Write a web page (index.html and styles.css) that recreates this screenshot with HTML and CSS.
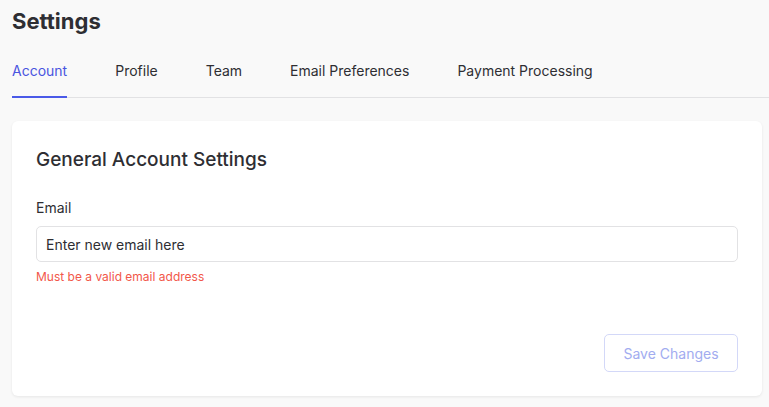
FILE: index.html
```html
<!DOCTYPE html>
<html lang="en">
<head>
  <meta charset="UTF-8">
  <meta name="viewport" content="width=device-width, initial-scale=1.0">
  <title>Settings</title>
  <link rel="stylesheet" href="styles.css">
</head>
<body>
  <div class="page">
    <h1 class="title">Settings</h1>
    <ul class="tabs">
      <li class="tab active">Account</li>
      <li class="tab">Profile</li>
      <li class="tab">Team</li>
      <li class="tab">Email Preferences</li>
      <li class="tab">Payment Processing</li>
    </ul>
    <div class="card">
      <h2 class="card-title">General Account Settings</h2>
      <label class="label" for="email">Email</label>
      <input class="input" id="email" type="text" value="Enter new email here">
      <div class="error">Must be a valid email address</div>
      <div class="actions">
        <button class="btn" disabled>Save Changes</button>
      </div>
    </div>
  </div>
</body>
</html>
```

FILE: styles.css
```css
* {
  margin: 0;
  padding: 0;
  box-sizing: border-box;
}

html,
body {
  width: 100%;
  height: 100%;
  overflow: hidden;
}

body {
  background-color: #f9f9f9;
  font-family: Inter, "Liberation Sans", sans-serif;
  color: #2e2e33;
}

.page {
  padding-left: 12px;
}

.title {
  font-size: 22px;
  font-weight: 700;
  line-height: 30px;
  padding-top: 6px;
}

.tabs {
  list-style: none;
  display: flex;
  gap: 48px;
  margin-top: 25px;
  border-bottom: 1px solid #e2e2e4;
}

.tabs .tab {
  font-size: 14px;
  line-height: 20px;
  padding-bottom: 15px;
  border-bottom: 2px solid transparent;
  margin-bottom: -1px;
}

.tabs .tab.active {
  color: #4a55e0;
  border-bottom-color: #4a5ae8;
}

.card {
  width: 750px;
  margin-top: 23px;
  background-color: #fff;
  border-radius: 6px;
  box-shadow: 0 1px 3px rgba(0,0,0,.08);
  padding: 24px;
}

.card-title {
  font-size: 19px;
  font-weight: 500;
  line-height: 30px;
}

.label {
  display: block;
  margin-top: 23px;
  font-size: 14px;
  line-height: 20px;
}

.input {
  display: block;
  width: 100%;
  height: 36px;
  margin-top: 8px;
  padding: 0 9px;
  border: 1px solid #e2e2e4;
  border-radius: 5px;
  font-family: inherit;
  font-size: 14px;
  color: #2e2e33;
  outline: none;
}

.error {
  margin-top: 6px;
  font-size: 12px;
  line-height: 18px;
  color: #f2574a;
}

.actions {
  display: flex;
  justify-content: flex-end;
  margin-top: 48px;
}

.btn {
  height: 38px;
  padding: 0 16px;
  width: 134px;
  background-color: #fff;
  border: 1px solid #d3d8f8;
  border-radius: 5px;
  font-family: inherit;
  font-size: 14px;
  color: #a2acf0;
}
```
